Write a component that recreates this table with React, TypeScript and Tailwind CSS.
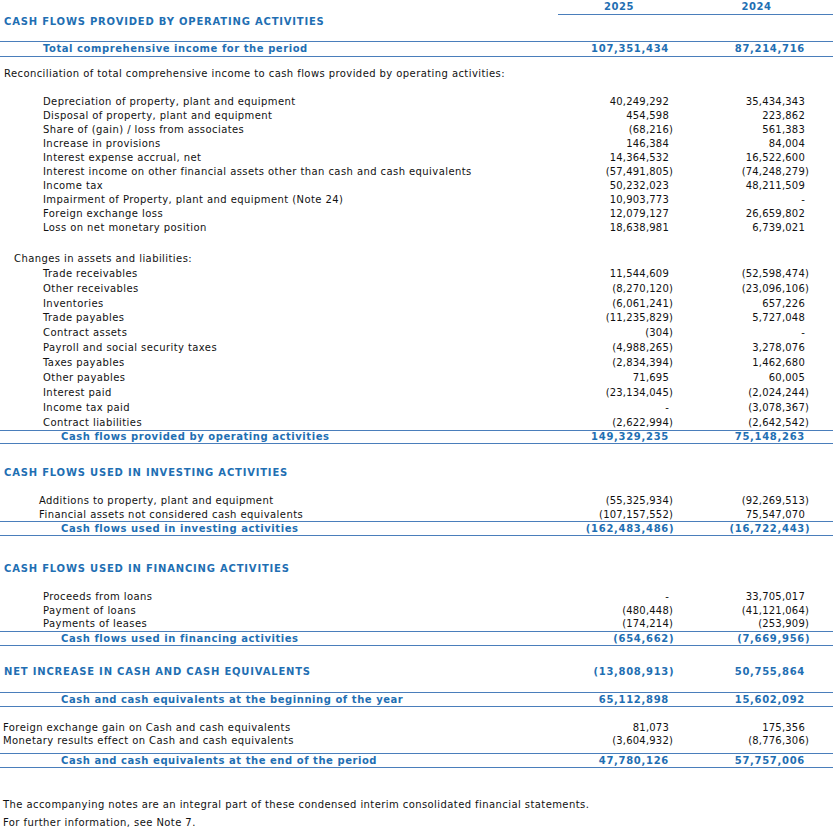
import React from "react";

const LINE = "h-px w-full bg-[#4a7ebb] shrink-0";

function Num({ v, bold }: { v?: string; bold?: boolean }) {
  if (!v) return null;
  const neg = v.startsWith("(") && v.endsWith(")");
  const core = neg ? v.slice(0, -1) : v;
  return (
    <span className="inline-flex whitespace-pre">
      <span className={bold ? "tracking-[0.7px]" : "tracking-[0.2px]"}>{core}</span>
      <span className="w-[6px] text-left">{neg ? ")" : ""}</span>
    </span>
  );
}

type RowProps = {
  h: string;
  label?: string;
  pad?: string;
  a?: string;
  b?: string;
  kind?: "normal" | "total" | "title";
};

function Row({ h, label, pad = "pl-[43px]", a, b, kind = "normal" }: RowProps) {
  const tone =
    kind === "normal"
      ? "text-[#111111] font-normal"
      : "text-[#1f6fb3] font-bold";
  const track =
    kind === "normal"
      ? "tracking-[0.42px]"
      : kind === "total"
      ? "tracking-[0.55px]"
      : "tracking-[0.8px]";
  const bold = kind !== "normal";
  return (
    <div className={`flex items-center shrink-0 ${h} ${tone}`}>
      <div className={`flex-1 whitespace-nowrap ${pad} ${track}`}>{label}</div>
      <div className="w-[122px] flex justify-end pr-[5px]">
        <Num v={a} bold={bold} />
      </div>
      <div className="w-[153px] flex justify-end pr-[22px]">
        <Num v={b} bold={bold} />
      </div>
    </div>
  );
}

function Gap({ h }: { h: string }) {
  return <div className={`shrink-0 ${h}`} />;
}

export default function App() {
  return (
    <div
      className="w-[833px] h-[832px] bg-white overflow-hidden flex flex-col text-[10px] leading-none"
      style={{ fontFamily: '"DejaVu Sans", Verdana, sans-serif' }}
    >
      {/* header */}
      <div className="flex h-[15px] shrink-0 font-bold text-[#1f6fb3] tracking-[0.6px]">
        <div className="flex-1" />
        <div className="flex border-b border-[#4a7ebb]">
          <div className="w-[122px] flex items-center justify-center">2025</div>
          <div className="w-[153px] flex items-center justify-center">2024</div>
        </div>
      </div>
      <Row h="h-[14px]" kind="title" pad="pl-[4px]" label="CASH FLOWS PROVIDED BY OPERATING ACTIVITIES" />
      <Gap h="h-[12px]" />
      <div className={LINE} />
      <Row h="h-[14px]" kind="total" label="Total comprehensive income for the period" a="107,351,434" b="87,214,716" />
      <div className={LINE} />
      <Gap h="h-[10px]" />
      <Row h="h-[14px]" pad="pl-[4px]" label="Reconciliation of total comprehensive income to cash flows provided by operating activities:" />
      <Gap h="h-[14px]" />
      <Row h="h-[14px]" label="Depreciation of property, plant and equipment" a="40,249,292" b="35,434,343" />
      <Row h="h-[14px]" label="Disposal of property, plant and equipment" a="454,598" b="223,862" />
      <Row h="h-[14px]" label="Share of (gain) / loss from associates" a="(68,216)" b="561,383" />
      <Row h="h-[14px]" label="Increase in provisions" a="146,384" b="84,004" />
      <Row h="h-[14px]" label="Interest expense accrual, net" a="14,364,532" b="16,522,600" />
      <Row h="h-[14px]" label="Interest income on other financial assets other than cash and cash equivalents" a="(57,491,805)" b="(74,248,279)" />
      <Row h="h-[14px]" label="Income tax" a="50,232,023" b="48,211,509" />
      <Row h="h-[14px]" label="Impairment of Property, plant and equipment (Note 24)" a="10,903,773" b="-" />
      <Row h="h-[14px]" label="Foreign exchange loss" a="12,079,127" b="26,659,802" />
      <Row h="h-[14px]" label="Loss on net monetary position" a="18,638,981" b="6,739,021" />
      <Gap h="h-[16px]" />
      <Row h="h-[15px]" pad="pl-[14px]" label="Changes in assets and liabilities:" />
      <Row h="h-[15px]" label="Trade receivables" a="11,544,609" b="(52,598,474)" />
      <Row h="h-[15px]" label="Other receivables" a="(8,270,120)" b="(23,096,106)" />
      <Row h="h-[15px]" label="Inventories" a="(6,061,241)" b="657,226" />
      <Row h="h-[14px]" label="Trade payables" a="(11,235,829)" b="5,727,048" />
      <Row h="h-[15px]" label="Contract assets" a="(304)" b="-" />
      <Row h="h-[15px]" label="Payroll and social security taxes" a="(4,988,265)" b="3,278,076" />
      <Row h="h-[15px]" label="Taxes payables" a="(2,834,394)" b="1,462,680" />
      <Row h="h-[15px]" label="Other payables" a="71,695" b="60,005" />
      <Row h="h-[15px]" label="Interest paid" a="(23,134,045)" b="(2,024,244)" />
      <Row h="h-[15px]" label="Income tax paid" a="-" b="(3,078,367)" />
      <Row h="h-[15px]" label="Contract liabilities" a="(2,622,994)" b="(2,642,542)" />
      <div className={LINE} />
      <Row h="h-[12px]" kind="total" pad="pl-[61px]" label="Cash flows provided by operating activities" a="149,329,235" b="75,148,263" />
      <div className={LINE} />
      <Gap h="h-[22px]" />
      <Row h="h-[14px]" kind="title" pad="pl-[4px]" label="CASH FLOWS USED IN INVESTING ACTIVITIES" />
      <Gap h="h-[14px]" />
      <Row h="h-[14px]" pad="pl-[39px]" label="Additions to property, plant and equipment" a="(55,325,934)" b="(92,269,513)" />
      <Row h="h-[13px]" pad="pl-[39px]" label="Financial assets not considered cash equivalents" a="(107,157,552)" b="75,547,070" />
      <div className={LINE} />
      <Row h="h-[13px]" kind="total" pad="pl-[61px]" label="Cash flows used in investing activities" a="(162,483,486)" b="(16,722,443)" />
      <div className={LINE} />
      <Gap h="h-[26px]" />
      <Row h="h-[14px]" kind="title" pad="pl-[4px]" label="CASH FLOWS USED IN FINANCING ACTIVITIES" />
      <Gap h="h-[14px]" />
      <Row h="h-[14px]" label="Proceeds from loans" a="-" b="33,705,017" />
      <Row h="h-[13px]" label="Payment of loans" a="(480,448)" b="(41,121,064)" />
      <Row h="h-[14px]" label="Payments of leases" a="(174,214)" b="(253,909)" />
      <div className={LINE} />
      <Row h="h-[13px]" kind="total" pad="pl-[61px]" label="Cash flows used in financing activities" a="(654,662)" b="(7,669,956)" />
      <div className={LINE} />
      <Gap h="h-[19px]" />
      <Row h="h-[14px]" kind="title" pad="pl-[4px]" label="NET INCREASE IN CASH AND CASH EQUIVALENTS" a="(13,808,913)" b="50,755,864" />
      <Gap h="h-[13px]" />
      <div className={LINE} />
      <Row h="h-[13px]" kind="total" pad="pl-[61px]" label="Cash and cash equivalents at the beginning of the year" a="65,112,898" b="15,602,092" />
      <div className={LINE} />
      <Gap h="h-[14px]" />
      <Row h="h-[13px]" pad="pl-[3px]" label="Foreign exchange gain on Cash and cash equivalents" a="81,073" b="175,356" />
      <Row h="h-[13px]" pad="pl-[3px]" label="Monetary results effect on Cash and cash equivalents" a="(3,604,932)" b="(8,776,306)" />
      <Gap h="h-[6px]" />
      <div className={LINE} />
      <Row h="h-[13px]" kind="total" pad="pl-[61px]" label="Cash and cash equivalents at the end of the period" a="47,780,126" b="57,757,006" />
      <div className={LINE} />
      <Gap h="h-[30px]" />
      <Row h="h-[14px]" pad="pl-[3px]" label="The accompanying notes are an integral part of these condensed interim consolidated financial statements." />
      <Gap h="h-[4px]" />
      <Row h="h-[14px]" pad="pl-[3px]" label="For further information, see Note 7." />
    </div>
  );
}
